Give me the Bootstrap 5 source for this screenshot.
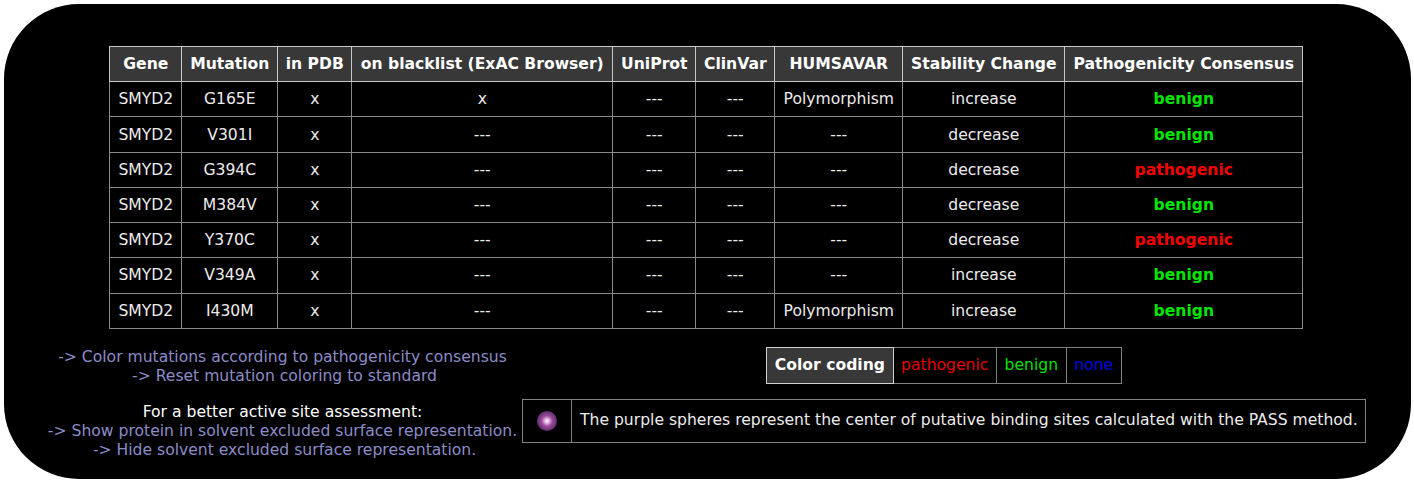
<!DOCTYPE html>
<html lang="en"><head><meta charset="utf-8"><title>Mutations</title>
<link href="https://cdn.jsdelivr.net/npm/bootstrap@5.3.0/dist/css/bootstrap.min.css" rel="stylesheet">
<style>
html,body{height:483px;overflow:hidden;background:#fff;}
body{font-family:"DejaVu Sans",sans-serif;font-size:15.6px;line-height:19px;color:#fff;}
.panel-black{margin:4px 3px 4px 4px;height:475px;background:#000;border-radius:75px;padding-top:42px;}
.mut-table{width:1193px;table-layout:fixed;border-collapse:collapse;font-size:15.6px;color:#ececec;}
.mut-table th,.mut-table td{border:1px solid #8a8a8a;text-align:center;padding:0;height:35.22px;vertical-align:middle;background:#000;font-weight:400;}
.mut-table td{padding-top:1px;}
.mut-table th{background:#383838;color:#fff;font-weight:700;border-color:#c8c8c8;}
.mut-table td.ok{color:#00e600;font-weight:700;}
.mut-table td.bad{color:#f50000;font-weight:700;}
.lower-row{margin-top:18px;padding-left:39px;}
.left-col{width:479px;color:#fff;padding-top:1px;}
.lnk{color:#8c8cc8;}
.nudge{padding-left:4px;}
.spaced{margin-top:17px;}
.right-col{width:844px;}
.code-table,.pass-table{border-collapse:collapse;}
.code-table th,.code-table td{border:1px solid #808080;padding:0 7.6px;height:36px;}
.code-table th{background:#383838;font-weight:700;border-color:#d0d0d0;color:#fff;}
.c-red{color:#e60000;}.c-green{color:#00e000;}.c-blue{color:#0000e6;}
.pass-table{width:844px;margin-top:15px;color:#ececec;}
.pass-table td{border:1px solid #808080;height:43px;padding:0 0 0 8px;white-space:nowrap;}
.pass-table td:first-child{width:49px;padding:0;text-align:center;}
.orb{display:inline-block;width:20px;height:20px;border-radius:50%;background:radial-gradient(circle,#fff 0,#f0c8f0 12%,#9a4a9a 38%,#5a2a6a 75%,#2a1a3a 100%);vertical-align:middle;}
.tbl-wrap{padding-right:2.4px;}
</style></head><body>
<div class="panel-black">
<div class="d-flex justify-content-center tbl-wrap">
<table class="mut-table"><colgroup><col style="width:72px"><col style="width:96px"><col style="width:74px"><col style="width:261px"><col style="width:83px"><col style="width:79px"><col style="width:128px"><col style="width:162px"><col style="width:238px"></colgroup>
<thead><tr><th>Gene</th><th>Mutation</th><th>in PDB</th><th>on blacklist (ExAC Browser)</th><th>UniProt</th><th>ClinVar</th><th>HUMSAVAR</th><th>Stability Change</th><th>Pathogenicity Consensus</th></tr></thead>
<tbody>
<tr><td>SMYD2</td><td>G165E</td><td>x</td><td>x</td><td>---</td><td>---</td><td>Polymorphism</td><td>increase</td><td class="ok">benign</td></tr>
<tr><td>SMYD2</td><td>V301I</td><td>x</td><td>---</td><td>---</td><td>---</td><td>---</td><td>decrease</td><td class="ok">benign</td></tr>
<tr><td>SMYD2</td><td>G394C</td><td>x</td><td>---</td><td>---</td><td>---</td><td>---</td><td>decrease</td><td class="bad">pathogenic</td></tr>
<tr><td>SMYD2</td><td>M384V</td><td>x</td><td>---</td><td>---</td><td>---</td><td>---</td><td>decrease</td><td class="ok">benign</td></tr>
<tr><td>SMYD2</td><td>Y370C</td><td>x</td><td>---</td><td>---</td><td>---</td><td>---</td><td>decrease</td><td class="bad">pathogenic</td></tr>
<tr><td>SMYD2</td><td>V349A</td><td>x</td><td>---</td><td>---</td><td>---</td><td>---</td><td>increase</td><td class="ok">benign</td></tr>
<tr><td>SMYD2</td><td>I430M</td><td>x</td><td>---</td><td>---</td><td>---</td><td>Polymorphism</td><td>increase</td><td class="ok">benign</td></tr>
</tbody></table>
</div>
<div class="d-flex lower-row">
<div class="left-col text-center">
<div class="lnk">-&gt; Color mutations according to pathogenicity consensus</div>
<div class="lnk nudge">-&gt; Reset mutation coloring to standard</div>
<div class="spaced">For a better active site assessment:</div>
<div class="lnk">-&gt; Show protein in solvent excluded surface representation.</div>
<div class="lnk nudge">-&gt; Hide solvent excluded surface representation.</div>
</div>
<div class="right-col d-flex flex-column align-items-center">
<table class="code-table"><tr><th>Color coding</th><td class="c-red">pathogenic</td><td class="c-green">benign</td><td class="c-blue">none</td></tr></table>
<table class="pass-table"><tr><td><span class="orb"></span></td><td>The purple spheres represent the center of putative binding sites calculated with the PASS method.</td></tr></table>
</div>
</div>
</div>
<script src="https://cdn.jsdelivr.net/npm/bootstrap@5.3.0/dist/js/bootstrap.bundle.min.js"></script>
</body></html>
